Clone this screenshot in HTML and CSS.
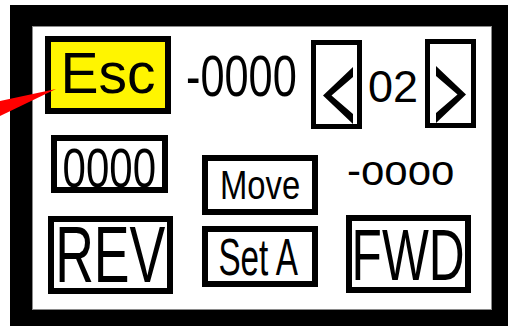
FILE: index.html
```html
<!DOCTYPE html>
<html>
<head>
<meta charset="utf-8">
<link rel="stylesheet" href="styles.css">
</head>
<body>
<div class="frame">
  <div class="screen">
    <div class="col col1">
      <div class="box esc"><span class="t t-esc">Esc</span></div>
      <div class="box zeros"><span class="t t-zeros">0000</span></div>
      <div class="box rev"><span class="t t-rev">REV</span></div>
    </div>
    <div class="col col2">
      <div class="readout"><span class="t t-minus">-0000</span></div>
      <div class="box move"><span class="t t-move">Move</span></div>
      <div class="box seta"><span class="t t-seta">Set A</span></div>
    </div>
    <div class="col col3">
      <div class="nav">
        <div class="navbox prev">
          <svg class="chev" viewBox="0 0 30 57" width="30" height="57"><polygon points="30,0 30,10 8.5,28.5 30,47 30,57 0,28.5"/></svg>
        </div>
        <span class="page">02</span>
        <div class="navbox next">
          <svg class="chev" viewBox="0 0 30 57" width="30" height="57"><polygon points="0,0 30,28.5 0,57 0,47 21.5,28.5 0,10"/></svg>
        </div>
      </div>
      <div class="readout2"><span class="t t-oooo">-oooo</span></div>
      <div class="box fwd"><span class="t t-fwd">FWD</span></div>
    </div>
  </div>
</div>
<svg class="arrow" viewBox="0 0 60 130" width="60" height="130"><polygon points="0,101 56,89 0,116"/></svg>
</body>
</html>
```

FILE: styles.css
```css
html, body {
  margin: 0;
  padding: 0;
  background: #fff;
  width: 508px;
  height: 326px;
  overflow: hidden;
}
body {
  position: relative;
  font-family: "Liberation Sans", Arial, sans-serif;
  color: #000;
}
.frame {
  margin: 5px 0 0 10px;
  background: #000;
  padding: 21px 16px 16px 22px;
  width: 460px;
  height: 284px;
}
.screen {
  width: 460px;
  height: 284px;
  background: #fff;
  box-shadow: inset 0 0 0 1px #8a8a8a;
  display: flex;
  align-items: flex-start;
}
.col {
  display: flex;
  flex-direction: column;
  align-items: flex-start;
}
.col1 { margin-left: 13px; width: 130px; }
.col2 { margin-left: 13px; width: 123px; }
.col3 { width: 181px; }

.box {
  box-sizing: border-box;
  border: 6px solid #000;
  display: flex;
  align-items: center;
  justify-content: center;
  background: #fff;
}
.t {
  display: block;
  line-height: 1;
  white-space: nowrap;
  transform-origin: center;
}

.esc { margin-top: 10px; width: 126px; height: 78px; background: #fff500; padding-bottom: 4px; }
.t-esc { font-size: 57px; }

.zeros { margin-top: 21px; margin-left: 6px; width: 117px; height: 58px; padding-top: 8px; }
.t-zeros { font-size: 56px; transform: scaleX(0.75); }

.rev { margin-top: 23px; margin-left: 3px; width: 125px; height: 78px; }
.t-rev { font-size: 80px; transform: scaleX(0.67); }

.readout { margin-top: 22px; margin-left: -2px; height: 57px; }
.t-minus { font-size: 57px; transform: scaleX(0.76); transform-origin: left center; }

.move { margin-top: 50px; margin-left: 14px; width: 116px; height: 60px; }
.t-move { font-size: 41px; transform: scaleX(0.8); }

.seta { margin-top: 11px; margin-left: 14px; width: 116px; height: 61px; }
.t-seta { font-size: 52px; transform: scaleX(0.64); margin-right: 3px; }

.nav {
  display: flex;
  align-items: flex-start;
  height: 103px;
}
.navbox {
  box-sizing: border-box;
  width: 51px;
  height: 89px;
  border: 5px solid #000;
  display: flex;
  flex-direction: column;
  justify-content: flex-end;
}
.chev { display: block; fill: #000; }
.prev { margin-top: 14px; padding-left: 7px; }
.next { margin-top: 13px; margin-left: 7px; padding-left: 6px; }
.page {
  margin-top: 38px;
  margin-left: 6px;
  font-size: 45px;
  line-height: 1;
}

.readout2 { margin-top: 21px; margin-left: 36px; height: 42px; }
.t-oooo { font-size: 42px; }

.fwd { margin-top: 23px; margin-left: 35px; width: 125px; height: 78px; }
.t-fwd { font-size: 73px; transform: scaleX(0.68); }

.arrow {
  position: absolute;
  left: 0;
  top: 0;
  fill: #ff0000;
}
```
